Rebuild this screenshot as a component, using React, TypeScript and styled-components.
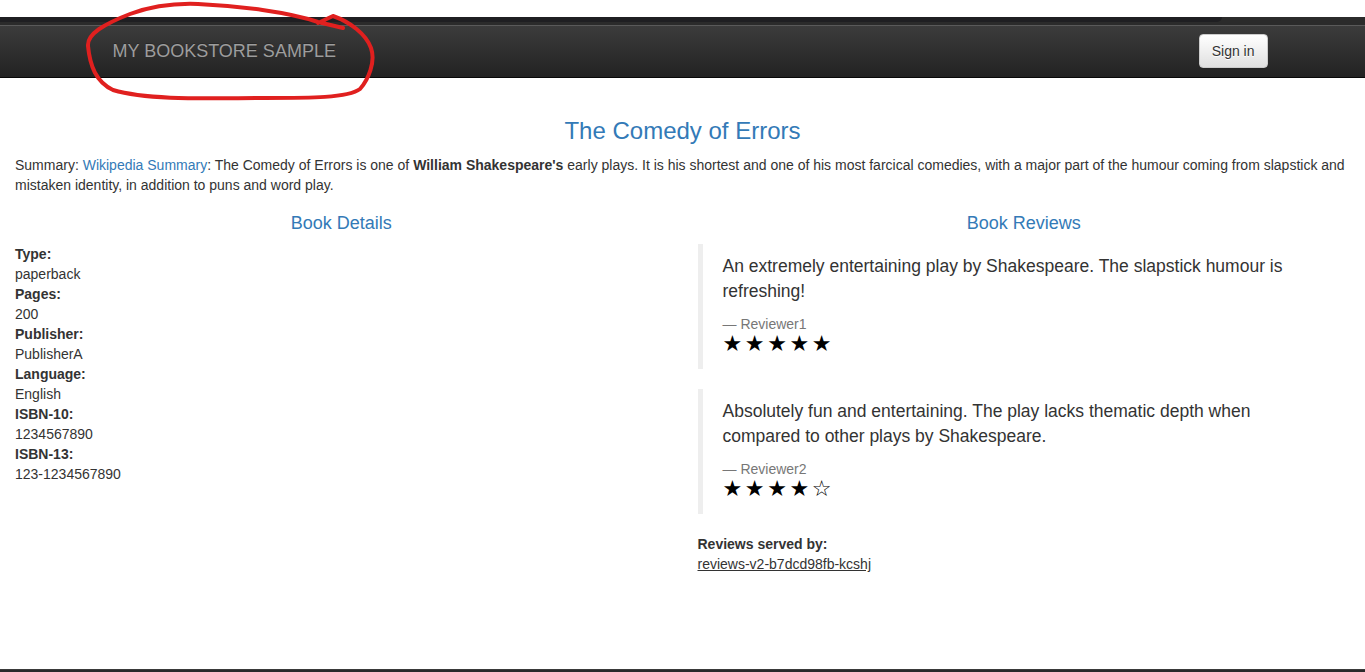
import React from "react";
import styled, { createGlobalStyle } from "styled-components";

const Global = createGlobalStyle`
  html, body { margin: 0; padding: 0; background: #fff; }
  body {
    font-family: "Liberation Sans", Arial, Helvetica, sans-serif;
    font-size: 14px;
    line-height: 20px;
    color: #333;
  }
  * { box-sizing: border-box; }
`;

const Page = styled.div`
  position: relative;
  min-height: 100vh;
  display: flex;
  flex-direction: column;
`;

const TopGap = styled.div`
  height: 17px;
  background: #fff;
`;

const Strip = styled.div`
  height: 9px;
  background: #2b2b2b;
  border-bottom: 1px solid #5a5a5a;
  display: flex;
`;

const StripTab = styled.div`
  width: 1222px;
  height: 5px;
  background: #1f1f22;
  border-bottom-right-radius: 8px;
`;

const Navbar = styled.nav`
  height: 52px;
  background: linear-gradient(to bottom, #3c3c3c 0%, #222 100%);
  border-bottom: 1px solid #080808;
`;

const NavContainer = styled.div`
  width: 1170px;
  margin: 0 auto;
  padding: 0 0 0 15px;
  display: flex;
  align-items: flex-start;
  justify-content: space-between;
`;

const Brand = styled.a`
  font-size: 18px;
  line-height: 20px;
  padding: 15px 0;
  color: #9d9d9d;
  text-decoration: none;
  text-shadow: 0 -1px 0 rgba(0, 0, 0, 0.25);
`;

const SignIn = styled.button`
  margin-top: 8px;
  height: 34px;
  padding: 6px 12px;
  font-family: inherit;
  font-size: 14px;
  line-height: 20px;
  color: #333;
  background: linear-gradient(to bottom, #fff 0%, #e0e0e0 100%);
  border: 1px solid #ccc;
  border-radius: 4px;
  text-shadow: 0 1px 0 #fff;
  box-shadow: inset 0 1px 0 rgba(255, 255, 255, 0.15), 0 1px 1px rgba(0, 0, 0, 0.075);
`;

const Content = styled.main`
  padding: 40px 15px 0;
`;

const Title = styled.h3`
  margin: 0 0 11px;
  font-size: 24px;
  line-height: 26.4px;
  font-weight: 500;
  color: #337ab7;
  text-align: center;
`;

const Summary = styled.p`
  margin: 0 0 10px;
`;

const Link = styled.a`
  color: #337ab7;
  text-decoration: none;
`;

const Row = styled.div`
  display: grid;
  grid-template-columns: 1fr 1fr;
  margin: 0 -15px;
`;

const Col = styled.div`
  padding: 0 15px;
`;

const SectionTitle = styled.h4`
  margin: 9px 0 10px;
  font-size: 18px;
  line-height: 19.8px;
  font-weight: 500;
  color: #337ab7;
  text-align: center;
`;

const Dl = styled.dl`
  margin: 0;
`;

const Dt = styled.dt`
  font-weight: bold;
`;

const Dd = styled.dd`
  margin: 0;
`;

const Quote = styled.blockquote`
  margin: 0 0 20px;
  padding: 10px 20px;
  border-left: 5px solid #eee;
  font-size: 17.5px;
  line-height: 25px;
`;

const QuoteText = styled.p`
  margin: 0 0 10px;
`;

const QuoteFooter = styled.footer`
  font-size: 14px;
  line-height: 20px;
  color: #777;
`;

const Stars = styled.div`
  font-family: "DejaVu Sans", sans-serif;
  font-size: 22px;
  line-height: 19px;
  padding-bottom: 6px;
  letter-spacing: 2.6px;
  color: #000;
`;

const Served = styled.u`
  color: #333;
`;

const BottomBar = styled.div`
  margin-top: auto;
  height: 3px;
  background: #2a2a2a;
  border-top: 1px solid #3a3a3a;
`;

const Annotation = styled.svg`
  position: absolute;
  left: 0;
  top: 0;
  pointer-events: none;
`;

const reviews = [
  {
    text: "An extremely entertaining play by Shakespeare. The slapstick humour is refreshing!",
    who: "Reviewer1",
    stars: 5,
  },
  {
    text: "Absolutely fun and entertaining. The play lacks thematic depth when compared to other plays by Shakespeare.",
    who: "Reviewer2",
    stars: 4,
  },
];

const details: [string, string][] = [
  ["Type:", "paperback"],
  ["Pages:", "200"],
  ["Publisher:", "PublisherA"],
  ["Language:", "English"],
  ["ISBN-10:", "1234567890"],
  ["ISBN-13:", "123-1234567890"],
];

export default function App() {
  return (
    <Page>
      <Global />
      <TopGap />
      <Strip>
        <StripTab />
      </Strip>
      <Navbar>
        <NavContainer>
          <Brand href="#">MY BOOKSTORE SAMPLE</Brand>
          <SignIn>Sign in</SignIn>
        </NavContainer>
      </Navbar>
      <Content>
        <Title>The Comedy of Errors</Title>
        <Summary>
          Summary: <Link href="#">Wikipedia Summary</Link>: The Comedy of Errors is one of{" "}
          <b>William Shakespeare's</b> early plays. It is his shortest and one of his most farcical
          comedies, with a major part of the humour coming from slapstick and mistaken identity, in
          addition to puns and word play.
        </Summary>
        <Row>
          <Col>
            <SectionTitle>Book Details</SectionTitle>
            <Dl>
              {details.map(([k, v]) => (
                <React.Fragment key={k}>
                  <Dt>{k}</Dt>
                  <Dd>{v}</Dd>
                </React.Fragment>
              ))}
            </Dl>
          </Col>
          <Col>
            <SectionTitle>Book Reviews</SectionTitle>
            {reviews.map((r) => (
              <Quote key={r.who}>
                <QuoteText>{r.text}</QuoteText>
                <QuoteFooter>— {r.who}</QuoteFooter>
                <Stars>
                  {"★".repeat(r.stars)}
                  {"☆".repeat(5 - r.stars)}
                </Stars>
              </Quote>
            ))}
            <Dl>
              <Dt>Reviews served by:</Dt>
              <Served>reviews-v2-b7dcd98fb-kcshj</Served>
            </Dl>
          </Col>
        </Row>
      </Content>
      <BottomBar />
      <Annotation width="400" height="110" viewBox="0 0 400 110">
        <path
          d="M 318 23 L 333 16 C 350 22 366 34 371 48 C 376 62 368 80 360 89 C 348 98 310 98 265 98 C 215 98 150 101 113 90 C 96 82 90 66 88 46 C 87 34 104 24 130 14 C 152 6 172 3 198 4 C 240 6 288 12 318 22 L 343 28"
          fill="none"
          stroke="#e0201f"
          strokeWidth="4"
          strokeLinecap="round"
          strokeLinejoin="round"
        />
      </Annotation>
    </Page>
  );
}
